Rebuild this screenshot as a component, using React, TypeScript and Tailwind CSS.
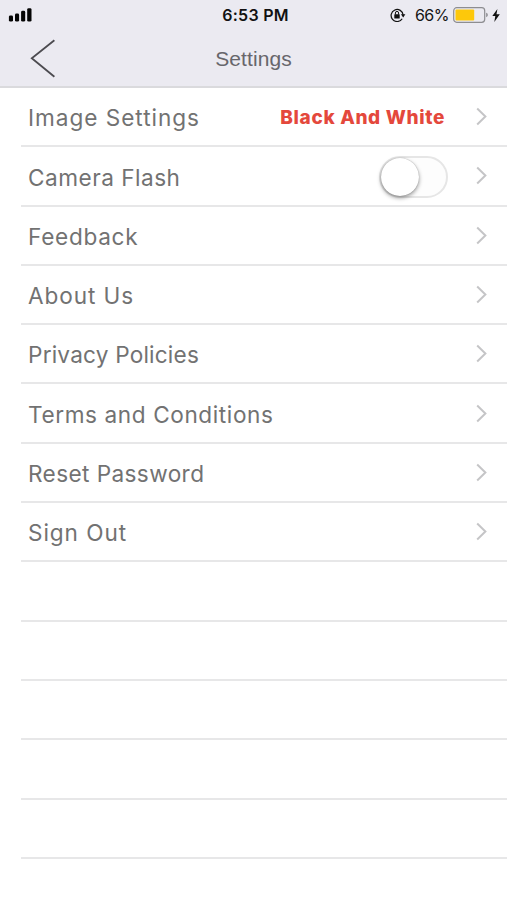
import type { ReactNode } from "react";
import clsx from "clsx";

type Row = {
  label: string;
  tracking: string;
  extra?: ReactNode;
};

function Signal() {
  return (
    <svg width="24" height="15" viewBox="0 0 24 15" fill="#050505">
      <rect x="0.9" y="7.4" width="4.1" height="6.2" rx="1.4" />
      <rect x="7" y="5.6" width="4.1" height="8" rx="1.4" />
      <rect x="13.1" y="2.8" width="4.1" height="10.8" rx="1.4" />
      <rect x="19.2" y="0.2" width="4.3" height="13.4" rx="1.4" />
    </svg>
  );
}

function RotationLock() {
  return (
    <svg width="16" height="14" viewBox="0 0 16 14" fill="none" stroke="#111">
      <path d="M12.2 10.7A6 6 0 1 1 13.1 7" strokeWidth="1.2" />
      <path d="M10.9 6.3h4.5l-2.2 3.1z" fill="#111" stroke="none" />
      <rect x="4.3" y="6.3" width="5.4" height="4.1" rx="0.5" fill="#111" stroke="none" />
      <path d="M5.4 6.5V5a1.6 1.6 0 0 1 3.2 0v1.5" strokeWidth="1" />
    </svg>
  );
}

function Battery() {
  return (
    <svg width="36" height="16" viewBox="0 0 36 16">
      <rect x="0.7" y="0.7" width="31" height="14.6" rx="3" fill="none" stroke="#8d8d91" strokeWidth="1.2" />
      <rect x="2.5" y="2.6" width="18.7" height="10.8" rx="1" fill="#fdc80b" />
      <path d="M33.3 5.8c1.8.6 1.8 3.8 0 4.4z" fill="#77777b" />
    </svg>
  );
}

function Bolt() {
  return (
    <svg width="8" height="13" viewBox="0 0 8 13" fill="#111">
      <path d="M5.4 0 0.3 7.1h3L2.3 13 7.8 5.3H4.5z" />
    </svg>
  );
}

function StatusBar() {
  return (
    <div className="grid h-[30px] grid-cols-[1fr_auto_1fr] items-center pr-[7px] pl-2">
      <Signal />
      <span className="pl-[3px] font-['Inter',sans-serif] text-[16px] leading-[30px] font-semibold tracking-[0.25px] text-[#111]">
        6:53 PM
      </span>
      <div className="flex items-center justify-end">
        <RotationLock />
        <span className="mr-[4px] ml-[9px] font-['Inter',sans-serif] text-[16px] tracking-[-0.5px] text-[#151515]">66%</span>
        <Battery />
        <span className="ml-[3px]">
          <Bolt />
        </span>
      </div>
    </div>
  );
}

function NavBar() {
  return (
    <div className="grid h-[57px] grid-cols-[1fr_auto_1fr] items-center">
      <button type="button" aria-label="Back" className="ml-[30px] w-[26px]">
        <svg width="26" height="40" viewBox="0 0 26 40" fill="none" stroke="#4c4b50" strokeWidth="1.8">
          <path d="M24.4 1.2 1.8 19.2l22.6 18.6" />
        </svg>
      </button>
      <h1 className="font-['Liberation_Sans',sans-serif] text-[21px] leading-[57px] tracking-[0.1px] text-[#67666b]">
        Settings
      </h1>
    </div>
  );
}

function Chevron() {
  return (
    <svg width="12" height="19" viewBox="0 0 12 19" fill="none" stroke="#c5c5c7" strokeWidth="2">
      <path d="m1.2 1.5 8.2 8-8.2 8" />
    </svg>
  );
}

function Toggle() {
  return (
    <button
      type="button"
      role="switch"
      aria-checked="false"
      aria-label="Camera Flash"
      className="mt-[2px] mr-[-2px] h-[42px] w-[69px] rounded-full border-2 border-[#e6e6e6] bg-[#fdfdfd]"
    >
      <span className="block size-[38px] rounded-full bg-white shadow-[0_2px_4px_rgba(0,0,0,0.4),0_0_1px_rgba(0,0,0,0.35)]" />
    </button>
  );
}

const rows: Row[] = [
  {
    label: "Image Settings",
    tracking: "tracking-[0.97px]",
    extra: (
      <span className="mt-[3px] mr-[1px] font-['Inter',sans-serif] text-[19px] font-extrabold tracking-[0.65px] text-[#e4483c]">
        Black And White
      </span>
    ),
  },
  { label: "Camera Flash", tracking: "tracking-[0.5px]", extra: <Toggle /> },
  { label: "Feedback", tracking: "tracking-[0.7px]" },
  { label: "About Us", tracking: "tracking-[0.9px]" },
  { label: "Privacy Policies", tracking: "tracking-[0.2px]" },
  { label: "Terms and Conditions", tracking: "tracking-[0.6px]" },
  { label: "Reset Password", tracking: "tracking-[0.4px]" },
  { label: "Sign Out", tracking: "tracking-[0.93px]" },
];

const emptyRows = [0, 1, 2, 3, 4];

export default function App() {
  return (
    <div className="h-[900px] w-[507px] overflow-hidden bg-white">
      <header className="h-[88px] border-b-2 border-[#dadadd] bg-[#ebeaf1]">
        <StatusBar />
        <NavBar />
      </header>
      <ul className="pl-[21px]">
        {rows.map((row) => (
          <li
            key={row.label}
            className="flex h-[59.3px] items-center border-b-2 border-[#e7e7e8] pr-[19px] pl-[7px]"
          >
            <span
              className={clsx(
                "mt-[3px] flex-1 font-['Inter',sans-serif] text-[22.6px] font-normal whitespace-nowrap text-[#727272]",
                row.tracking,
              )}
            >
              {row.label}
            </span>
            {row.extra}
            <span className="ml-[30px]">
              <Chevron />
            </span>
          </li>
        ))}
        {emptyRows.map((n) => (
          <li key={n} className="h-[59.3px] border-b-2 border-[#e7e7e8]" />
        ))}
      </ul>
    </div>
  );
}
